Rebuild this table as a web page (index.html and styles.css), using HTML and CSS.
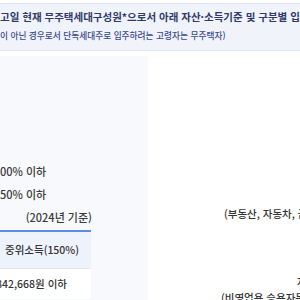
FILE: index.html
```html
<!DOCTYPE html>
<html lang="ko">
<head>
<meta charset="utf-8">
<link rel="stylesheet" href="styles.css">
</head>
<body>
<div class="notice">
  <p class="notice-main">고일 현재 무주택세대구성원*으로서 아래 자산·소득기준 및 구분별 입주자격</p>
  <p class="notice-sub">이 아닌 경우로서 단독세대주로 입주하려는 고령자는 무주택자)</p>
</div>
<div class="content">
  <div class="side">
    <p class="crit first">00% 이하</p>
    <p class="crit">50% 이하</p>
    <p class="base">(2024년 기준)</p>
    <div class="table">
      <div class="th">중위소득(150%)</div>
      <div class="td">842,668원 이하</div>
    </div>
  </div>
  <div class="main">
    <p class="asset">(부동산, 자동차, 금융자산 포함)</p>
    <p class="car">자동차가액</p>
    <p class="car2">(비영업용 승용자동차)</p>
  </div>
</div>
</body>
</html>
```
FILE: styles.css
```css
html, body {
  margin: 0;
  padding: 0;
  background: #ffffff;
  font-family: "Noto Sans CJK KR", "Noto Sans", sans-serif;
  overflow: hidden;
}
p { margin: 0; white-space: nowrap; }

.notice {
  margin-top: 3px;
  height: 46px;
  background: #f1f3fb;
  border-top: 1px solid #dfe3f4;
  border-bottom: 1px solid #dfe3f4;
  overflow: hidden;
}
.notice-main {
  margin-top: 5px;
  font-size: 10.5px;
  line-height: 16px;
  font-weight: 700;
  color: #2e3b6a;
}
.notice-sub {
  margin-top: 4px;
  font-size: 8.7px;
  line-height: 14px;
  font-weight: 500;
  color: #3b4a8c;
}

.content {
  display: flex;
  margin-top: 5px;
  height: 250px;
}
.side {
  width: 148px;
  flex: none;
  background: #f7f9fc;
  overflow: hidden;
}
.crit {
  font-size: 11px;
  line-height: 14px;
  font-weight: 500;
  color: #3a3a3a;
  margin-top: 9px;
}
.crit.first { margin-top: 108px; }
.base {
  width: 92px;
  text-align: right;
  font-size: 11px;
  line-height: 14px;
  font-weight: 500;
  color: #3a3a3a;
  margin-top: 9px;
}
.table {
  width: 91px;
  margin-top: 6px;
  border-top: 2px solid #5a8de0;
}
.th {
  height: 36px;
  line-height: 36px;
  background: #eef3fb;
  border-bottom: 1px solid #e3e8f0;
  padding-left: 5px;
  font-size: 10.5px;
  font-weight: 500;
  color: #333333;
  white-space: nowrap;
}
.td {
  background: #ffffff;
  height: 30px;
  line-height: 30px;
  margin-left: -4px;
  font-size: 10.5px;
  font-weight: 500;
  color: #333333;
  white-space: nowrap;
}
.main {
  flex: 1;
  overflow: hidden;
  font-size: 10.5px;
  font-weight: 500;
  color: #333333;
}
.asset {
  margin-top: 151px;
  padding-left: 76px;
  line-height: 14px;
}
.car {
  margin-top: 54px;
  padding-left: 149px;
  line-height: 14px;
}
.car2 {
  margin-top: 2px;
  padding-left: 73px;
  line-height: 14px;
}
```
